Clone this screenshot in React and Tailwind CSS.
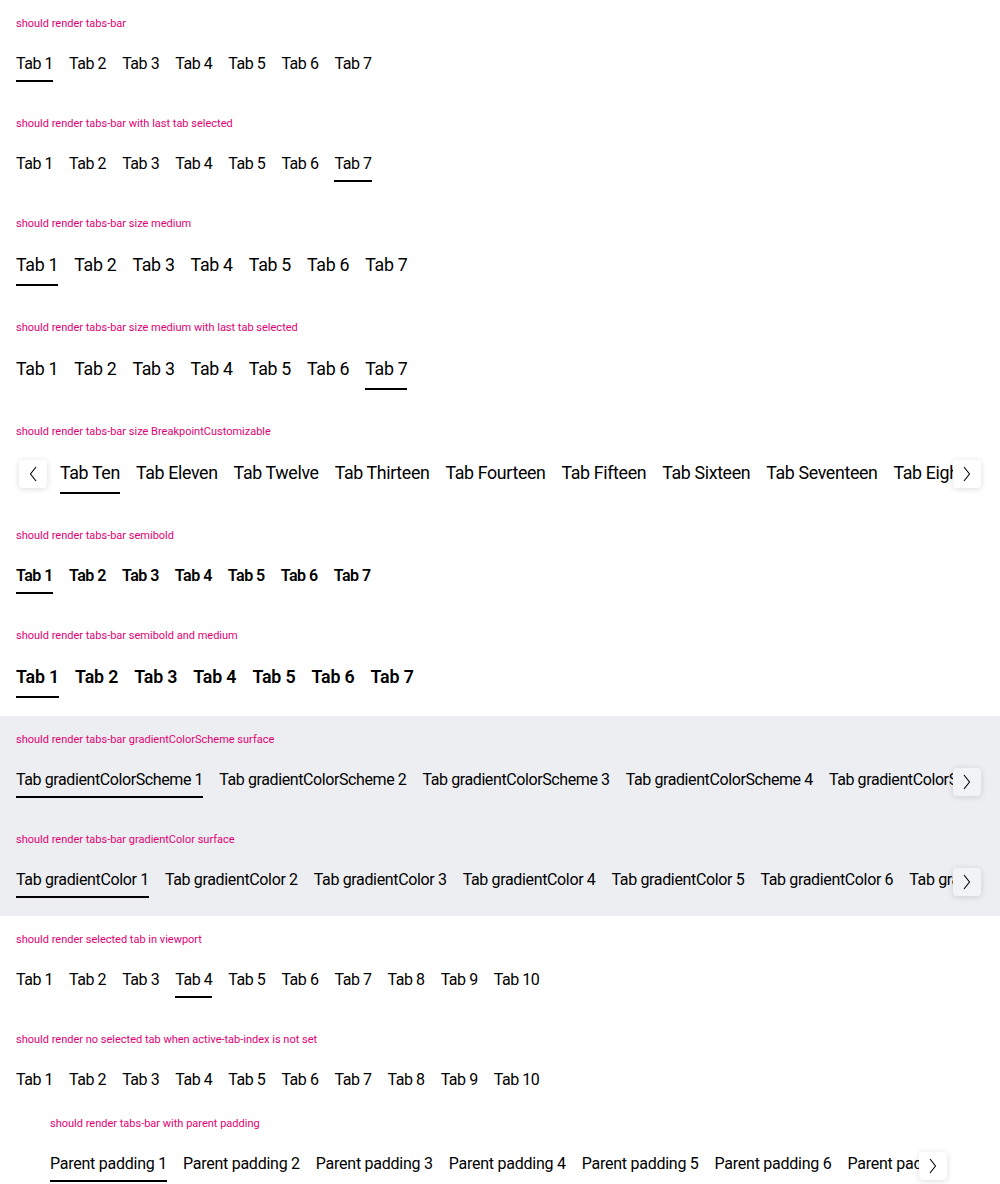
import React from 'react';

const font = { fontFamily: 'Roboto, "Liberation Sans", sans-serif' };

function Chevron({ dir }) {
    return (
        <svg width="10" height="16" viewBox="0 0 10 16" fill="none">
            {dir === 'left' ? (
                <path d="M8 1 L2.5 8 L8 15" stroke="#000" strokeWidth="1.1" />
            ) : (
                <path d="M2 1 L7.5 8 L2 15" stroke="#000" strokeWidth="1.1" />
            )}
        </svg>
    );
}

function ScrollButton({ dir, surface, className }) {
    return (
        <div
            className={`absolute w-[28px] h-[28px] rounded-[4px] flex items-center justify-center shadow-[0_1px_6px_rgba(0,0,0,0.14)] ${
                surface ? 'bg-[#f2f3f6]' : 'bg-white'
            } ${className}`}
        >
            <Chevron dir={dir} />
        </div>
    );
}

// tracking is passed per bar so the Roboto fallback keeps the reference tab widths
function TabsBar({ tabs, active = -1, medium, semibold, offset, left, right, surface, track }) {
    const size = medium ? 'text-[17.8px] leading-[28px]' : 'text-[16px] leading-[24px]';
    const tracking = track || (medium ? 'tracking-[-0.3px]' : 'tracking-[-0.45px]');
    const weight = semibold ? 'font-semibold' : 'font-normal';
    return (
        <div className="relative">
            <div className={`flex gap-4 overflow-hidden whitespace-nowrap ${offset ? 'pl-[44px]' : ''} ${right ? 'mr-[31px]' : ''}`}>
                {tabs.map((t, i) => (
                    <div key={t} className="flex flex-col shrink-0">
                        <span className={`${size} ${tracking} ${weight} text-black ${medium ? 'pb-[5px]' : 'pb-[4px]'}`}>{t}</span>
                        <div className={`h-[2px] ${i === active ? 'bg-black' : 'bg-transparent'}`} />
                    </div>
                ))}
            </div>
            {left && <ScrollButton dir="left" surface={surface} className="left-[3px] top-[1px]" />}
            {right && (
                <ScrollButton dir="right" surface={surface} className={`right-[3px] ${medium ? 'top-[1px]' : 'top-0'}`} />
            )}
        </div>
    );
}

function Section({ label, medium, children, className = 'px-4 pt-[18px]' }) {
    return (
        <div className={`pb-[18px] ${className}`}>
            <div className={`text-[11px] leading-[12px] text-[#e20074] ${medium ? 'mb-[21px]' : 'mb-[22px]'}`}>{label}</div>
            {children}
        </div>
    );
}

const seven = ['Tab 1', 'Tab 2', 'Tab 3', 'Tab 4', 'Tab 5', 'Tab 6', 'Tab 7'];
const ten = [...seven, 'Tab 8', 'Tab 9', 'Tab 10'];
const words = ['Tab Ten', 'Tab Eleven', 'Tab Twelve', 'Tab Thirteen', 'Tab Fourteen', 'Tab Fifteen', 'Tab Sixteen', 'Tab Seventeen', 'Tab Eighteen', 'Tab Nineteen'];
const scheme = [1, 2, 3, 4, 5, 6].map((n) => `Tab gradientColorScheme ${n}`);
const color = [1, 2, 3, 4, 5, 6, 7, 8].map((n) => `Tab gradientColor ${n}`);
const parent = [1, 2, 3, 4, 5, 6, 7, 8].map((n) => `Parent padding ${n}`);

export default function App() {
    return (
        <div className="w-[1000px] bg-white text-black" style={font}>
            <Section label="should render tabs-bar">
                <TabsBar tabs={seven} active={0} />
            </Section>
            <Section label="should render tabs-bar with last tab selected">
                <TabsBar tabs={seven} active={6} />
            </Section>
            <Section label="should render tabs-bar size medium" medium>
                <TabsBar tabs={seven} active={0} medium />
            </Section>
            <Section label="should render tabs-bar size medium with last tab selected" medium>
                <TabsBar tabs={seven} active={6} medium />
            </Section>
            <Section label="should render tabs-bar size BreakpointCustomizable" medium>
                <TabsBar tabs={words} active={0} medium offset left right track="tracking-[-0.35px]" />
            </Section>
            <Section label="should render tabs-bar semibold">
                <TabsBar tabs={seven} active={0} semibold track="tracking-[-0.5px]" />
            </Section>
            <Section label="should render tabs-bar semibold and medium" medium>
                <TabsBar tabs={seven} active={0} semibold medium track="tracking-[-0.15px]" />
            </Section>
            <div className="bg-[#edeef2]">
                <Section label="should render tabs-bar gradientColorScheme surface">
                    <TabsBar tabs={scheme} active={0} right surface track="tracking-[-0.4px]" />
                </Section>
                <Section label="should render tabs-bar gradientColor surface">
                    <TabsBar tabs={color} active={0} right surface track="tracking-[-0.35px]" />
                </Section>
            </div>
            <Section label="should render selected tab in viewport">
                <TabsBar tabs={ten} active={3} />
            </Section>
            <Section label="should render no selected tab when active-tab-index is not set">
                <TabsBar tabs={ten} />
            </Section>
            <Section label="should render tabs-bar with parent padding" className="px-[50px] pt-[2px]">
                <TabsBar tabs={parent} active={0} right track="tracking-[-0.25px]" />
            </Section>
        </div>
    );
}
